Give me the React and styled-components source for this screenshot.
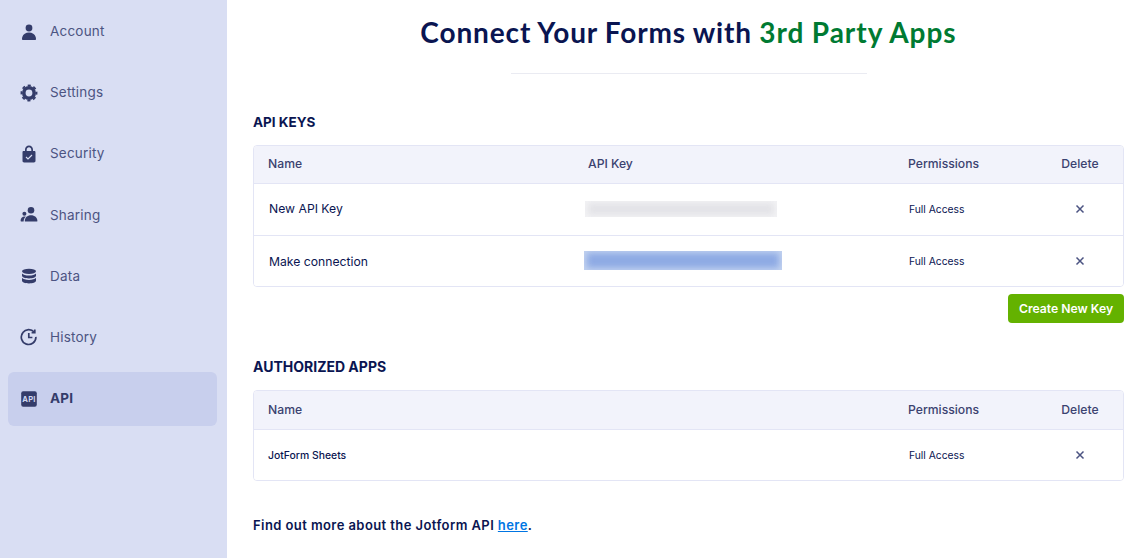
import React from "react";
import styled, { createGlobalStyle } from "styled-components";

const Global = createGlobalStyle`
  html, body { margin: 0; padding: 0; background: #fff; }
  body { font-family: Inter, "Noto Sans", sans-serif; color: #0a1551; }
  #root { height: 558px; overflow: hidden; }
`;
const Page = styled.div`display: flex; height: 558px; width: 1144px; overflow: hidden;`;
const Sidebar = styled.nav`
  width: 227px; flex: none; background: #d9def3; padding: 4.5px 10px 0 8px; box-sizing: border-box;
  display: flex; flex-direction: column; gap: 7.2px;
`;
const Item = styled.a`
  height: 54px; border-radius: 6px; display: flex; align-items: center; gap: 12px; padding-left: 12px;
  font-size: 13.5px; letter-spacing: 0.2px; color: ${p => (p.$active ? "#343c6a" : "#4c5482")};
  font-weight: ${p => (p.$active ? 700 : 400)};
  background: ${p => (p.$active ? "#c8cfed" : "transparent")};
`;
const Label = styled.span`margin-top: -1px;`;
const IconBox = styled.span`width: 18px; height: 18px; display: flex; flex: none; svg { display: block; }`;
const Main = styled.main`flex: 1; padding: 0 20px 0 26px; min-width: 0;`;
const Heading = styled.header`display: flex; flex-direction: column; align-items: center; padding-top: 15px;`;
const Title = styled.h1`
  margin: 0; font-family: Lato, sans-serif; font-weight: 700; font-size: 28px; line-height: 34px; letter-spacing: 0.87px; word-spacing: -0.4px; color: #0a1551;
  span { color: #007a32; letter-spacing: 0.98px; }
`;
const Rule = styled.div`width: 356px; height: 1px; background: #eaebf2; margin-top: 24px;`;
const SectionTitle = styled.h2`
  margin: 0; font-size: ${p => p.$size}px; font-weight: 700; line-height: 18px; color: #0a1551;
  margin-top: ${p => p.$top}px;
`;
const Table = styled.div`
  margin-top: 14px; border: 1px solid #e3e5f5; border-radius: 4px; overflow: hidden;
`;
const Row = styled.div`
  display: grid; grid-template-columns: ${p => p.$cols}; align-items: center; height: ${p => p.$h}px; box-sizing: border-box;
  padding-bottom: ${p => p.$pb || 0}px;
  background: ${p => (p.$head ? "#f2f3fb" : "#fff")};
  border-bottom: ${p => (p.$last ? "none" : "1px solid #e3e5f5")};
`;
const Head = styled.div`font-size: 12.2px; font-weight: 500; color: #3b4270; margin-top: -2px; padding-left: ${p => p.$pad || 0}px; text-align: ${p => p.$center ? "center" : "left"};`;
const NameCell = styled.div`font-size: 12.2px; color: #0a1551; padding-left: 15px;`;
const AppName = styled.div`font-size: 10.4px; font-weight: 500; color: #0a1551; padding-left: 14px;`;
const Perm = styled.div`font-size: 10.3px; color: #0a1551; padding-left: 1px;`;
const Del = styled.div`display: flex; justify-content: center; color: #4c5482; svg { display: block; }`;
const KeyCell = styled.div`position: relative; height: 20px;`;
const Blur = styled.div`
  position: absolute; left: ${p => p.$left}px; top: ${p => p.$top}px; width: ${p => p.$w}px; height: ${p => p.$h}px;
  background: ${p => p.$c}; overflow: hidden;
  &::after { content: ""; position: absolute; inset: -2px; background: ${p => p.$inner}; filter: blur(3px); margin: 4px 5px; }
`;
const Actions = styled.div`display: flex; justify-content: flex-end; margin-top: 7px;`;
const Button = styled.button`
  width: 116px; height: 29px; border: 0; border-radius: 4px; background: #64b200; color: #fff; padding: 0;
  font: 600 12.2px Inter, sans-serif;
`;
const Foot = styled.p`
  margin: 35px 0 0; font-size: 13px; font-weight: 600; line-height: 18px; letter-spacing: 0.42px; color: #0a1551;
  a { color: #0075e3; text-decoration: underline; }
`;

const icon = { width: 18, height: 18, viewBox: "0 0 18 18", fill: "#343c6a" };
const User = () => <svg {...icon}><circle cx="9" cy="5" r="3.4" /><path d="M2 16.200c0-.6 0-1.500.3-2.200C3.200 11.400 5.800 9.600 9 9.600s5.800 1.800 6.700 4.400c.3.700.3 1.600.3 2.200 0 .5-.3.800-.8.800H2.800c-.5 0-.8-.3-.8-.8z" /></svg>;
const Gear = () => (
  <svg {...icon} fill="none" stroke="#343c6a">
    <circle cx="9" cy="9" r="5.2" strokeWidth="3.6" />
    <circle cx="9" cy="9" r="7.6" strokeWidth="1.7" strokeDasharray="3.2 2.77" strokeDashoffset="1.6" />
  </svg>
);
const Lock = () => <svg {...icon}><path fillRule="evenodd" d="M5 6V4.700C5 2.400 6.700.6 9 .6s4 1.800 4 4.100V6h1.200c.9 0 1.300.5 1.300 1.300v8.400c0 1-.6 1.700-1.600 1.700H4.100c-1 0-1.600-.7-1.600-1.700V7.300C2.500 6.500 2.900 6 3.800 6zm1.700 0h4.600V4.700c0-1.300-1-2.400-2.300-2.400S6.700 3.400 6.700 4.700z" /><path d="M6 12l2 2 4-4" fill="none" stroke="#d9def3" strokeWidth="1.100" /></svg>;
const Share = () => <svg {...icon}><circle cx="11" cy="4.200" r="3.300" /><path d="M4.800 14.900c0-3.400 2.500-5.700 6.200-5.700s6.400 2.300 6.400 5.700c0 .4-.3.600-.6.600H5.400c-.4 0-.6-.2-.6-.6z" /><circle cx="4.400" cy="7.700" r="2" /><path d="M.6 14.800c0-2.400 1.400-4.300 4.200-4.300.4 0 .7 0 1 .1-1.200 1.100-2 2.700-2.200 4.900H1.200c-.4 0-.6-.3-.6-.7z" /></svg>;
const Data = () => <svg {...icon}><g transform="translate(0 1.100) scale(1 .88)"><ellipse cx="9" cy="3.600" rx="7" ry="3" /><path d="M2 6c1 1.500 3.800 2.300 7 2.300S15 7.500 16 6v2.700c0 1.700-3.100 3-7 3s-7-1.300-7-3z" /><path d="M2 11c1 1.500 3.800 2.400 7 2.400s6-.9 7-2.400v3.400c0 1.700-3.100 3-7 3s-7-1.300-7-3z" /></g></svg>;
const History = () => <svg {...icon} fill="none" stroke="#343c6a" strokeWidth="1.700"><path d="M15.900 8.900A7.300 7.300 0 112.900 4.600 7.300 7.300 0 0114.200 4" /><path d="M14.800 1.400v3.200h-3.200" /><path d="M8.800 5v4.500h3.600" /></svg>;
const Api = () => <svg {...icon}><rect x="1.200" y="1.200" width="15.600" height="15.600" rx="2" /><text x="9" y="11.800" textAnchor="middle" fontFamily="Inter, sans-serif" fontSize="7.600" fontWeight="700" fill="#d0d6f0">API</text></svg>;
const Cross = () => <svg width="10" height="10" viewBox="0 0 10 10" fill="none" stroke="currentColor" strokeWidth="1.500"><path d="M1.500 1.500l7 7M8.500 1.500l-7 7" /></svg>;

const nav = [["Account", User], ["Settings", Gear], ["Security", Lock], ["Sharing", Share], ["Data", Data], ["History", History], ["API", Api]];
const keyCols = "334px 320px 1fr 86px";
const appCols = "654px 1fr 86px";

export default function App() {
  return (
    <Page>
      <Global />
      <Sidebar>
        {nav.map(([label, I]) => (
          <Item key={label} $active={label === "API"}><IconBox><I /></IconBox><Label>{label}</Label></Item>
        ))}
      </Sidebar>
      <Main>
        <Heading>
          <Title>Connect Your Forms with <span>3rd Party Apps</span></Title>
          <Rule />
        </Heading>
        <SectionTitle $top={39} $size={13.5}>API KEYS</SectionTitle>
        <Table>
          <Row $head $cols={keyCols} $h={38}>
            <Head $pad={14}>Name</Head><Head>API Key</Head><Head>Permissions</Head><Head $center>Delete</Head>
          </Row>
          <Row $pb={2} $cols={keyCols} $h={52}>
            <NameCell>New API Key</NameCell>
            <KeyCell><Blur $left={-3} $top={2} $w={192} $h={16} $c="#f3f3f5" $inner="#e3e3e7" /></KeyCell>
            <Perm>Full Access</Perm><Del><Cross /></Del>
          </Row>
          <Row $last $cols={keyCols} $h={50}>
            <NameCell>Make connection</NameCell>
            <KeyCell><Blur $left={-4} $top={0} $w={198} $h={19} $c="#c3d3f0" $inner="#8eaae4" /></KeyCell>
            <Perm>Full Access</Perm><Del><Cross /></Del>
          </Row>
        </Table>
        <Actions><Button>Create New Key</Button></Actions>
        <SectionTitle $top={35} $size={14}>AUTHORIZED APPS</SectionTitle>
        <Table>
          <Row $head $cols={appCols} $h={39}>
            <Head $pad={14}>Name</Head><Head>Permissions</Head><Head $center>Delete</Head>
          </Row>
          <Row $last $cols={appCols} $h={50}>
            <AppName>JotForm Sheets</AppName><Perm>Full Access</Perm><Del><Cross /></Del>
          </Row>
        </Table>
        <Foot>Find out more about the Jotform API <a href="#here">here</a>.</Foot>
      </Main>
    </Page>
  );
}
